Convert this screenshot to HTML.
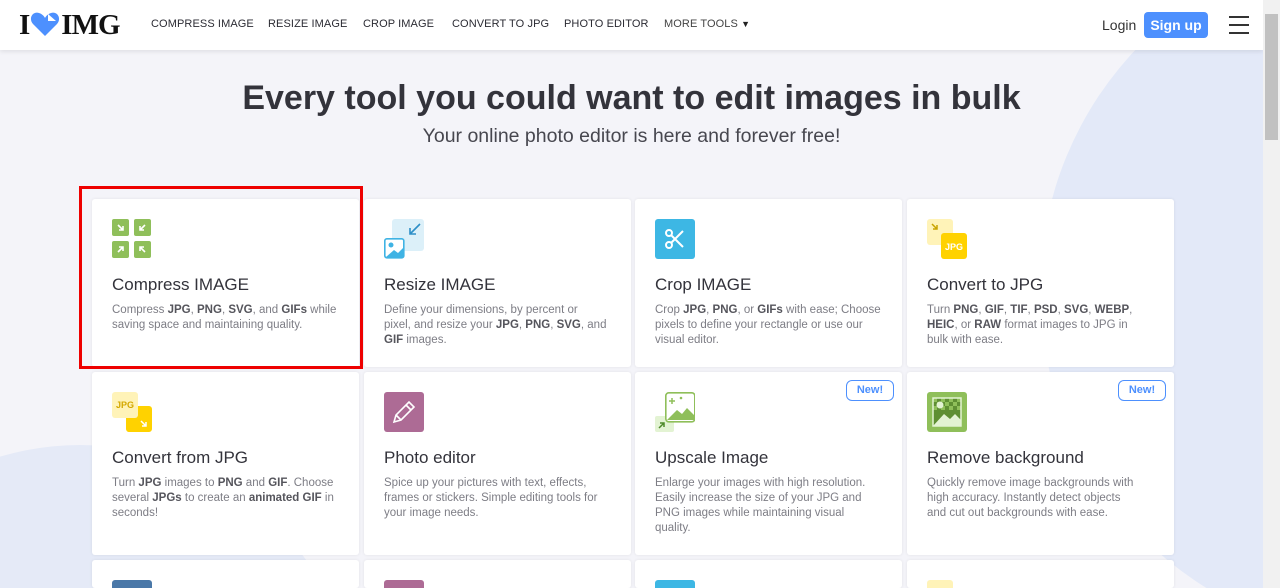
<!DOCTYPE html>
<html><head><meta charset="utf-8"><style>
*{margin:0;padding:0;box-sizing:border-box}
html,body{width:1280px;height:588px;overflow:hidden}
body{background:#f4f4f9;font-family:"Liberation Sans",sans-serif;position:relative;color:#33333b}
.clip{position:absolute;left:0;top:0;width:1280px;height:588px;overflow:hidden}
.bg1{position:absolute;left:1040px;top:-60px;width:700px;height:700px;border-radius:50%;background:#e3e9f8}
.bg2{position:absolute;left:-200px;top:445px;width:560px;height:560px;border-radius:50%;background:#e5eaf7}
.hdr{position:absolute;left:0;top:0;width:1263px;height:50px;background:#fff;box-shadow:0 2px 4px rgba(0,0,0,.08);z-index:3}
.logo{position:absolute;left:19px;top:9px;font-family:"Liberation Serif",serif;font-weight:bold;font-size:29px;color:#111;letter-spacing:-1px}
.nav{position:absolute;top:18px;font-size:11px;color:#2b2b33;letter-spacing:.1px}
.scroll{position:absolute;left:1263px;top:0;width:17px;height:588px;background:#f1f1f1;z-index:4}
.thumb{position:absolute;left:2px;top:14px;width:13px;height:126px;background:#c1c1c1}
h1{position:absolute;left:0;width:1263px;top:79px;text-align:center;font-size:34px;font-weight:bold;color:#33333b}
.sub{position:absolute;left:0;width:1263px;top:125px;text-align:center;font-size:19.5px;color:#47474f}
.card{position:absolute;width:267px;background:#fff;border-radius:3px;box-shadow:0 0 3px rgba(0,0,0,.08);z-index:1;overflow:hidden}
.card .ic{position:absolute;left:20px;top:20px;width:40px;height:40px}
.card .t{position:absolute;left:20px;top:76px;font-size:17px;color:#33333b}
.card .d{position:absolute;left:20px;top:104px;width:245px;white-space:nowrap;font-size:11.5px;line-height:15px;color:#7d7d85}
.card .d b{color:#55555c}
.new{position:absolute;right:8px;top:8px;width:48px;height:21px;border:1px solid #4d90fe;border-radius:6px;color:#4d90fe;font-size:11px;font-weight:bold;text-align:center;line-height:19px}
.red{position:absolute;left:79px;top:186px;width:284px;height:183px;border:3px solid #e00;z-index:2}
</style></head><body>
<div class="clip"><div class="bg1"></div><div class="bg2"></div></div>
<div class="hdr">
<div class="logo">I<svg width="30" height="24" viewBox="0 0 30 24" style="vertical-align:-2px;margin:0 1px"><path d="M15 24 L3 12 C-2 6 3 -1 9 1 C12 2 14 4 15 6 C16 4 18 2 21 1 C27 -1 32 6 27 12Z" fill="#4d90fe"/><path d="M18 2 L26 9 L18 9Z" fill="#fff"/></svg>IMG</div>
<div class="nav" style="left:151px">COMPRESS IMAGE</div>
<div class="nav" style="left:268px">RESIZE IMAGE</div>
<div class="nav" style="left:363px">CROP IMAGE</div>
<div class="nav" style="left:452px">CONVERT TO JPG</div>
<div class="nav" style="left:564px">PHOTO EDITOR</div>
<div class="nav" style="left:664px;color:#444">MORE TOOLS <span style="font-size:9px;color:#222">▼</span></div>
<div style="position:absolute;left:1102px;top:17px;font-size:14px;color:#333">Login</div>
<div style="position:absolute;left:1144px;top:12px;width:64px;height:26px;background:#4d90fe;border-radius:4px;color:#fff;font-size:14px;font-weight:bold;text-align:center;line-height:26px">Sign up</div>
<div style="position:absolute;left:1229px;top:16px;width:20px;height:2px;background:#333;box-shadow:0 8px 0 #333,0 16px 0 #333"></div>
</div>
<div class="scroll"><div class="thumb"></div></div>
<h1>Every tool you could want to edit images in bulk</h1>
<div class="sub">Your online photo editor is here and forever free!</div>

<div class="card" style="left:92px;top:199px;height:168px">
<svg class="ic" viewBox="0 0 40 40"><g fill="#8fbf5a"><rect x="0" y="0" width="17" height="17" rx="2"/><rect x="22" y="0" width="17" height="17" rx="2"/><rect x="0" y="22" width="17" height="17" rx="2"/><rect x="22" y="22" width="17" height="17" rx="2"/></g><g stroke="#fff" stroke-width="1.6" fill="none"><path d="M6 6l5 5M7 11h4V7"/><path d="M33 6l-5 5M28 7v4h4"/><path d="M6 33l5-5M7 28h4v4"/><path d="M33 33l-5-5M28 32v-4h4"/></g></svg>
<div class="t">Compress IMAGE</div>
<div class="d">Compress <b>JPG</b>, <b>PNG</b>, <b>SVG</b>, and <b>GIFs</b> while<br>saving space and maintaining quality.</div></div>

<div class="card" style="left:364px;top:199px;height:168px">
<svg class="ic" viewBox="0 0 40 40"><rect x="8" y="0" width="32" height="32" rx="3" fill="#dcf0f9"/><path d="M36 5l-10 10M26 9v6h6" stroke="#2e8fc7" stroke-width="1.6" fill="none"/><rect x="0.8" y="19.8" width="19" height="19" rx="2" fill="#fff" stroke="#3fb3e4" stroke-width="1.6"/><circle cx="7" cy="26" r="2.5" fill="#3fb3e4"/><path d="M2 38l8-7 4 3 5-5v9z" fill="#3fb3e4"/></svg>
<div class="t">Resize IMAGE</div>
<div class="d">Define your dimensions, by percent or<br>pixel, and resize your <b>JPG</b>, <b>PNG</b>, <b>SVG</b>, and<br><b>GIF</b> images.</div></div>

<div class="card" style="left:635px;top:199px;height:168px">
<svg class="ic" viewBox="0 0 40 40"><rect width="40" height="40" rx="3" fill="#3db7e4"/><g stroke="#fff" stroke-width="2" fill="none"><circle cx="14" cy="14" r="3"/><circle cx="14" cy="26" r="3"/><path d="M16 16l12 12M16 24l12-12"/></g></svg>
<div class="t">Crop IMAGE</div>
<div class="d">Crop <b>JPG</b>, <b>PNG</b>, or <b>GIFs</b> with ease; Choose<br>pixels to define your rectangle or use our<br>visual editor.</div></div>

<div class="card" style="left:907px;top:199px;height:168px">
<svg class="ic" viewBox="0 0 40 40"><rect width="26" height="26" rx="3" fill="#fff3b8"/><path d="M5 5l5 5M6 10h4V6" stroke="#c9a400" stroke-width="1.5" fill="none"/><rect x="14" y="14" width="26" height="26" rx="3" fill="#ffd200"/><text x="27" y="31" font-size="9" font-weight="bold" fill="#fff" text-anchor="middle" font-family="Liberation Sans">JPG</text></svg>
<div class="t">Convert to JPG</div>
<div class="d">Turn <b>PNG</b>, <b>GIF</b>, <b>TIF</b>, <b>PSD</b>, <b>SVG</b>, <b>WEBP</b>,<br><b>HEIC</b>, or <b>RAW</b> format images to JPG in<br>bulk with ease.</div></div>

<div class="card" style="left:92px;top:372px;height:183px">
<svg class="ic" viewBox="0 0 40 40"><rect x="14" y="14" width="26" height="26" rx="3" fill="#ffd200"/><path d="M29 29l5 5M30 34h4v-4" stroke="#fff" stroke-width="1.5" fill="none"/><rect width="26" height="26" rx="3" fill="#fff3b8"/><text x="13" y="16" font-size="9" font-weight="bold" fill="#d4a800" text-anchor="middle" font-family="Liberation Sans">JPG</text></svg>
<div class="t">Convert from JPG</div>
<div class="d">Turn <b>JPG</b> images to <b>PNG</b> and <b>GIF</b>. Choose<br>several <b>JPGs</b> to create an <b>animated GIF</b> in<br>seconds!</div></div>

<div class="card" style="left:364px;top:372px;height:183px">
<svg class="ic" viewBox="0 0 40 40"><rect width="40" height="40" rx="3" fill="#ad6b95"/><path d="M10 30l2-7 13-13 5 5-13 13z M22 13l5 5 M12 23l5 5" stroke="#fff" stroke-width="1.6" fill="none"/></svg>
<div class="t">Photo editor</div>
<div class="d">Spice up your pictures with text, effects,<br>frames or stickers. Simple editing tools for<br>your image needs.</div></div>

<div class="card" style="left:635px;top:372px;height:183px">
<div class="new">New!</div>
<svg class="ic" viewBox="0 0 40 40"><rect x="0" y="24" width="19" height="16" rx="2" fill="#e3f3d3"/><path d="M4 36l5-5M5 31h4v4" stroke="#4e8a2a" stroke-width="1.5" fill="none"/><rect x="10.8" y="0.8" width="29" height="29" rx="3" fill="#fff" stroke="#8fbf5a" stroke-width="1.6"/><path d="M12 28l10-10 5 4 5-6 7 7v5z" fill="#8fbf5a"/><path d="M17 6v6M14 9h6" stroke="#8fbf5a" stroke-width="1.5"/><circle cx="26" cy="6" r="1.3" fill="#8fbf5a"/></svg>
<div class="t">Upscale Image</div>
<div class="d">Enlarge your images with high resolution.<br>Easily increase the size of your JPG and<br>PNG images while maintaining visual<br>quality.</div></div>

<div class="card" style="left:907px;top:372px;height:183px">
<div class="new">New!</div>
<svg class="ic" viewBox="0 0 40 40"><rect width="40" height="40" rx="3" fill="#8fbf5a"/><rect x="6" y="6" width="28" height="28" fill="#5f8f33"/><path d="M6 6h4v4h-4zM14 6h4v4h-4zM22 6h4v4h-4zM30 6h4v4h-4zM10 10h4v4h-4zM18 10h4v4h-4zM26 10h4v4h-4zM6 14h4v4h-4zM14 14h4v4h-4zM22 14h4v4h-4zM30 14h4v4h-4z" fill="#8fbf5a"/><circle cx="13" cy="13" r="3.5" fill="#e3f3d3"/><path d="M6 34l11-12 6 5 5-5 6 6v6z" fill="#e3f3d3"/><rect x="6" y="6" width="28" height="28" fill="none" stroke="#e3f3d3" stroke-width="1.5"/></svg>
<div class="t">Remove background</div>
<div class="d">Quickly remove image backgrounds with<br>high accuracy. Instantly detect objects<br>and cut out backgrounds with ease.</div></div>

<div class="card" style="left:92px;top:560px;height:28px"><div style="position:absolute;left:20px;top:20px;width:40px;height:8px;border-radius:3px 3px 0 0;background:#4a78a8"></div></div>
<div class="card" style="left:364px;top:560px;height:28px"><div style="position:absolute;left:20px;top:20px;width:40px;height:8px;border-radius:3px 3px 0 0;background:#ad6b95"></div></div>
<div class="card" style="left:635px;top:560px;height:28px"><div style="position:absolute;left:20px;top:20px;width:40px;height:8px;border-radius:3px 3px 0 0;background:#3db7e4"></div></div>
<div class="card" style="left:907px;top:560px;height:28px"><div style="position:absolute;left:20px;top:20px;width:26px;height:8px;border-radius:3px 3px 0 0;background:#fff3b8"></div></div>

<div class="red"></div>
</body></html>
